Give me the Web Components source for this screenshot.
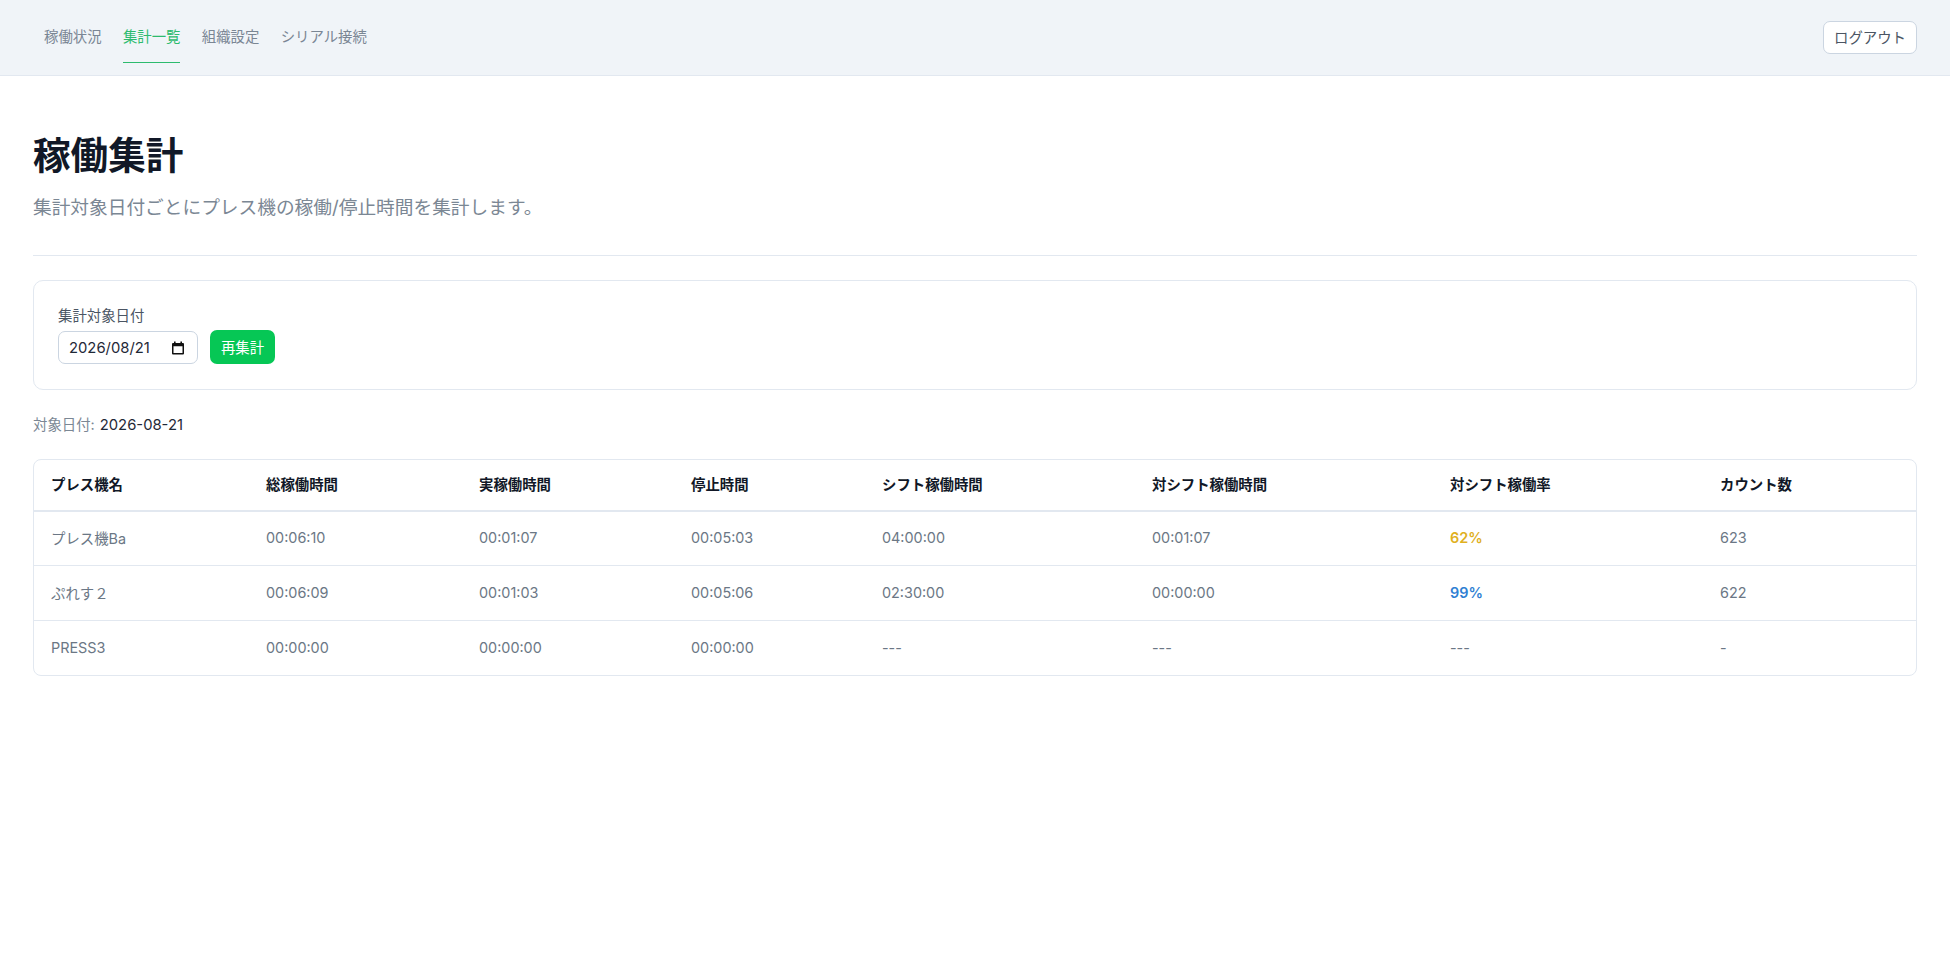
<!DOCTYPE html>
<html lang="ja">
<head>
<meta charset="utf-8">
<title>稼働集計</title>
<style>
    html, body {
        margin: 0;
        background: #fff;
        font-family: Inter, "Noto Sans CJK JP", sans-serif;
    }
</style>
</head>
<body>
<app-nav></app-nav>
<main-page>
    <page-heading title="稼働集計" subtitle="集計対象日付ごとにプレス機の稼働/停止時間を集計します。"></page-heading>
    <date-filter label="集計対象日付" value="2026/08/21" action="再集計"></date-filter>
    <target-date label="対象日付:" value="2026-08-21"></target-date>
    <summary-table></summary-table>
</main-page>

<script>
class AppNav extends HTMLElement {
    constructor() {
        super();
        this.attachShadow({ mode: 'open' });
        this.links = ['稼働状況', '集計一覧', '組織設定', 'シリアル接続'];
        this.activeLink = '集計一覧';
    }

    connectedCallback() {
        this.shadowRoot.innerHTML = `
            <style>
                :host {
                    display: flex;
                    justify-content: space-between;
                    align-items: center;
                    box-sizing: border-box;
                    height: 76px;
                    padding: 0 33px 0 44px;
                    background: #f0f4f8;
                    border-bottom: 1px solid #e2e8f0;
                }
                .links {
                    display: flex;
                    gap: 21.3px;
                    align-self: flex-start;
                }
                a {
                    display: block;
                    box-sizing: border-box;
                    height: 63px;
                    padding-top: 26px;
                    font-size: 14.4px;
                    line-height: 21px;
                    color: #7a8694;
                    text-decoration: none;
                    cursor: pointer;
                }
                a.active {
                    color: #2dbb6e;
                    border-bottom: 1px solid #2dbb6e;
                }
                button {
                    box-sizing: border-box;
                    height: 33px;
                    width: 94px;
                    padding: 0 0 2px;
                    font: inherit;
                    font-size: 14.4px;
                    color: #4b5563;
                    background: #fff;
                    border: 1px solid #cbd5e1;
                    border-radius: 7px;
                }
            </style>
            <nav class="links">
                ${this.links.map(link =>
                    `<a class="${link === this.activeLink ? 'active' : ''}">${link}</a>`
                ).join('')}
            </nav>
            <button>ログアウト</button>
        `;
    }
}

class MainPage extends HTMLElement {
    constructor() {
        super();
        this.attachShadow({ mode: 'open' });
    }

    connectedCallback() {
        this.shadowRoot.innerHTML = `
            <style>
                :host {
                    display: block;
                    padding: 0 33px;
                }
            </style>
            <slot></slot>
        `;
    }
}

class PageHeading extends HTMLElement {
    constructor() {
        super();
        this.attachShadow({ mode: 'open' });
    }

    connectedCallback() {
        this.shadowRoot.innerHTML = `
            <style>
                :host {
                    display: block;
                    padding-top: 55px;
                    height: 180px;
                    box-sizing: border-box;
                    border-bottom: 1px solid #e2e8f0;
                }
                h1 {
                    margin: 0;
                    font-size: 37.6px;
                    line-height: 50px;
                    font-weight: 700;
                    color: #111827;
                }
                p {
                    margin: 14px 0 0;
                    font-size: 18.7px;
                    line-height: 26px;
                    color: #7b8794;
                }
            </style>
            <h1>${this.getAttribute('title')}</h1>
            <p>${this.getAttribute('subtitle')}</p>
        `;
    }
}

class DateFilter extends HTMLElement {
    constructor() {
        super();
        this.attachShadow({ mode: 'open' });
    }

    connectedCallback() {
        this.shadowRoot.innerHTML = `
            <style>
                :host {
                    display: block;
                    box-sizing: border-box;
                    height: 110px;
                    margin-top: 24px;
                    padding: 24px 24px;
                    background: #fff;
                    border: 1px solid #e2e8f0;
                    border-radius: 10px;
                }
                label {
                    display: block;
                    font-size: 14.4px;
                    line-height: 22px;
                    color: #4b5563;
                }
                .row {
                    display: flex;
                    align-items: flex-end;
                    gap: 12px;
                    margin-top: 3px;
                }
                .input {
                    display: flex;
                    align-items: center;
                    justify-content: space-between;
                    box-sizing: border-box;
                    width: 140px;
                    height: 33px;
                    padding: 0 12px 0 10px;
                    font-size: 14.8px;
                    color: #1f2937;
                    background: #fff;
                    border: 1px solid #cbd5e1;
                    border-radius: 7px;
                }
                svg {
                    display: block;
                }
                button {
                    box-sizing: border-box;
                    width: 65px;
                    height: 34px;
                    padding: 0 0 2px;
                    font: inherit;
                    font-size: 14.4px;
                    color: #fff;
                    background: #06c755;
                    border: none;
                    border-radius: 7px;
                }
            </style>
            <label>${this.getAttribute('label')}</label>
            <div class="row">
                <div class="input">
                    <span>${this.getAttribute('value')}</span>
                    <svg width="14" height="14" viewBox="0 0 14 14">
                        <path d="M3 0.5h1.6V2h4.8V0.5H11V2h1a1 1 0 0 1 1 1v9.5a1 1 0 0 1-1 1H2a1 1 0 0 1-1-1V3a1 1 0 0 1 1-1h1zM2.5 5.2v6.8h9V5.2z" fill="#111" fill-rule="evenodd"/>
                    </svg>
                </div>
                <button>${this.getAttribute('action')}</button>
            </div>
        `;
    }
}

class TargetDate extends HTMLElement {
    constructor() {
        super();
        this.attachShadow({ mode: 'open' });
    }

    connectedCallback() {
        this.shadowRoot.innerHTML = `
            <style>
                :host {
                    display: block;
                    margin-top: 24px;
                    font-size: 14.4px;
                    line-height: 22px;
                    color: #7b8794;
                }
                span {
                    font-size: 14.8px;
                    margin-left: 1px;
                    color: #1f2937;
                }
            </style>
            ${this.getAttribute('label')} <span>${this.getAttribute('value')}</span>
        `;
    }
}

class SummaryTable extends HTMLElement {
    constructor() {
        super();
        this.attachShadow({ mode: 'open' });
        this.columns = [
            ['プレス機名', 215], ['総稼働時間', 213], ['実稼働時間', 212], ['停止時間', 191],
            ['シフト稼働時間', 270], ['対シフト稼働時間', 298], ['対シフト稼働率', 270], ['カウント数', 213]
        ];
        this.rows = [
            ['プレス機Ba', '00:06:10', '00:01:07', '00:05:03', '04:00:00', '00:01:07', '62%', '623'],
            ['ぷれす２', '00:06:09', '00:01:03', '00:05:06', '02:30:00', '00:00:00', '99%', '622'],
            ['PRESS3', '00:00:00', '00:00:00', '00:00:00', '---', '---', '---', '-']
        ];
    }

    connectedCallback() {
        this.shadowRoot.innerHTML = `
            <style>
                :host {
                    display: block;
                    margin-top: 23px;
                    box-sizing: border-box;
                    border: 1px solid #e2e8f0;
                    border-radius: 8px;
                    overflow: hidden;
                }
                table {
                    width: 100%;
                    table-layout: fixed;
                    border-collapse: collapse;
                    font-size: 14.4px;
                }
                th, td {
                    box-sizing: border-box;
                    padding: 0 17px;
                    text-align: left;
                }
                th {
                    height: 51px;
                    padding-bottom: 3px;
                    font-weight: 600;
                    color: #111827;
                    border-bottom: 2px solid #e2e8f0;
                }
                td {
                    height: 55px;
                    color: #6b7785;
                    border-bottom: 1px solid #e2e8f0;
                }
                tbody tr:first-child td {
                    height: 54px;
                    padding-bottom: 2px;
                }
                tr:last-child td {
                    border-bottom: none;
                }
                .warn { color: #e0b01e; font-weight: 600; }
                .good { color: #2f7fd3; font-weight: 600; }
            </style>
            <table>
                <colgroup>${this.columns.map(col => `<col style="width:${col[1]}px">`).join('')}</colgroup>
                <thead>
                    <tr>${this.columns.map(col => `<th>${col[0]}</th>`).join('')}</tr>
                </thead>
                <tbody>
                    ${this.rows.map(row => `<tr>${row.map(cell =>
                        `<td class="${this.rateClass(cell)}">${cell}</td>`
                    ).join('')}</tr>`).join('')}
                </tbody>
            </table>
        `;
    }

    rateClass(cell) {
        if (cell === '62%') return 'warn';
        if (cell === '99%') return 'good';
        return '';
    }
}

customElements.define('app-nav', AppNav);
customElements.define('main-page', MainPage);
customElements.define('page-heading', PageHeading);
customElements.define('date-filter', DateFilter);
customElements.define('target-date', TargetDate);
customElements.define('summary-table', SummaryTable);
</script>
</body>
</html>
